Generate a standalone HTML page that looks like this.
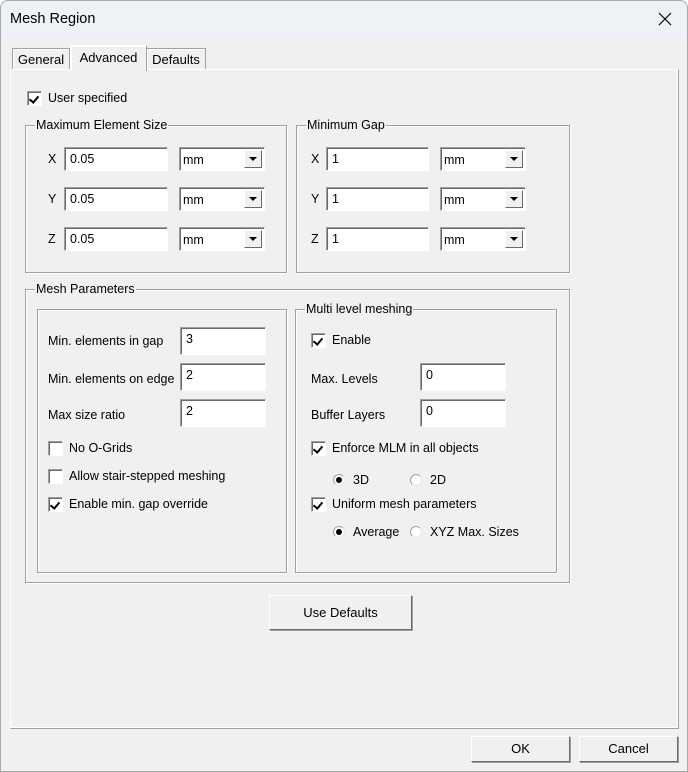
<!DOCTYPE html>
<html><head><meta charset="utf-8"><style>
*{box-sizing:border-box;margin:0;padding:0}
body{width:688px;height:772px;background:#fff;font-family:"Liberation Sans",sans-serif;font-size:12.5px;color:#000;overflow:hidden;position:relative}
.win{position:absolute;left:0;top:0;width:688px;height:772px;background:#f0f0f0;box-shadow:inset 0 0 0 1px #a8a8a8;border-radius:8px 8px 0 0;overflow:hidden}
.title{position:absolute;left:1px;top:1px;width:686px;height:37px;background:#eef2f6;border-radius:8px 8px 0 0}
.a{position:absolute;white-space:nowrap}
.grp{position:absolute;border:1px solid #a0a0a0;box-shadow:1px 1px 0 #fff, inset 1px 1px 0 #fff}
.leg{position:absolute;background:#f0f0f0;padding:0 1px;line-height:14px;top:-8px;left:9px}
.inp{position:absolute;background:#fff;border:1px solid;border-color:#a0a0a0 #fff #fff #a0a0a0;box-shadow:inset 1px 1px 0 #696969;padding:4px 0 0 5px;line-height:14px}
.sel{position:absolute;background:#fff;border:1px solid;border-color:#a0a0a0 #fff #fff #a0a0a0;box-shadow:inset 1px 1px 0 #696969;padding:5px 0 0 3px;line-height:14px}
.sel .b{position:absolute;right:2px;top:2px;width:18px;height:18px;background:#f0f0f0;border:1px solid;border-color:#fff #696969 #696969 #fff}
.sel .b:after{content:"";position:absolute;left:4px;top:6px;border-left:4px solid transparent;border-right:4px solid transparent;border-top:4px solid #000}
.cb{position:absolute;width:15px;height:15px;background:#fff;border:1px solid;border-color:#a0a0a0 #fff #fff #a0a0a0;box-shadow:inset 1px 1px 0 #696969}
.cb.on:after{content:"";position:absolute;left:3px;top:2px;width:4px;height:7px;border:solid #000;border-width:0 2px 2px 0;transform:rotate(40deg)}
.rd{position:absolute;width:12px;height:12px;border-radius:50%;background:#fff;border:1px solid;border-color:#a0a0a0 #e8e8e8 #e8e8e8 #a0a0a0}
.rd.on:after{content:"";position:absolute;left:2px;top:2px;width:6px;height:6px;border-radius:50%;background:#000}
.btn{position:absolute;background:#f0f0f0;border:1px solid;border-color:#fff #696969 #696969 #fff;box-shadow:1px 1px 0 #a0a0a0;text-align:center;font-size:13px}
.tab{position:absolute;background:#f0f0f0;border:1px solid #a0a0a0;border-bottom:none;font-size:13px;text-align:center;box-shadow:inset 1px 1px 0 #fff}
</style></head><body>
<div class="win">
<div class="title"></div>
<div class="a" style="left:10px;top:11px;font-size:14.5px">Mesh Region</div>
<svg class="a" style="left:658px;top:12px" width="14" height="14"><path d="M1 1L13 13M13 1L1 13" stroke="#000" stroke-width="1.2"/></svg>

<div class="a" style="left:10px;top:69px;width:669px;height:660px;border:1px solid #a0a0a0;border-top-color:#fff;border-left-color:#fff;box-shadow:inset -1px -1px 0 #fff"></div>
<div class="tab" style="left:12px;top:48px;width:58px;height:21px;line-height:21px">General</div>
<div class="tab" style="left:146px;top:48px;width:60px;height:21px;line-height:21px">Defaults</div>
<div class="tab" style="left:70px;top:45px;width:77px;height:26px;line-height:23px;border-color:#fff #a0a0a0 #f0f0f0 #fff">Advanced</div>

<div class="cb on" style="left:27px;top:91px"></div>
<div class="a" style="left:48px;top:91px;line-height:15px">User specified</div>

<div class="grp" style="left:25px;top:125px;width:262px;height:148px"><div class="leg">Maximum Element Size</div></div>
<div class="grp" style="left:296px;top:125px;width:274px;height:148px"><div class="leg">Minimum Gap</div></div>

<div class="a" style="left:48px;top:152px">X</div>
<div class="a" style="left:48px;top:192px">Y</div>
<div class="a" style="left:48px;top:232px">Z</div>
<div class="inp" style="left:64px;top:147px;width:104px;height:24px">0.05</div>
<div class="inp" style="left:64px;top:187px;width:104px;height:24px">0.05</div>
<div class="inp" style="left:64px;top:227px;width:104px;height:24px">0.05</div>
<div class="sel" style="left:179px;top:147px;width:86px;height:24px">mm<div class="b"></div></div>
<div class="sel" style="left:179px;top:187px;width:86px;height:24px">mm<div class="b"></div></div>
<div class="sel" style="left:179px;top:227px;width:86px;height:24px">mm<div class="b"></div></div>

<div class="a" style="left:311px;top:152px">X</div>
<div class="a" style="left:311px;top:192px">Y</div>
<div class="a" style="left:311px;top:232px">Z</div>
<div class="inp" style="left:326px;top:147px;width:103px;height:24px">1</div>
<div class="inp" style="left:326px;top:187px;width:103px;height:24px">1</div>
<div class="inp" style="left:326px;top:227px;width:103px;height:24px">1</div>
<div class="sel" style="left:440px;top:147px;width:86px;height:24px">mm<div class="b"></div></div>
<div class="sel" style="left:440px;top:187px;width:86px;height:24px">mm<div class="b"></div></div>
<div class="sel" style="left:440px;top:227px;width:86px;height:24px">mm<div class="b"></div></div>

<div class="grp" style="left:25px;top:289px;width:545px;height:294px"><div class="leg">Mesh Parameters</div></div>
<div class="grp" style="left:37px;top:309px;width:250px;height:264px"></div>
<div class="grp" style="left:295px;top:309px;width:262px;height:264px"><div class="leg">Multi level meshing</div></div>

<div class="a" style="left:48px;top:334px;width:116px;overflow:hidden">Min. elements in gap</div>
<div class="a" style="left:48px;top:372px;width:128px;overflow:hidden">Min. elements on edge</div>
<div class="a" style="left:48px;top:408px">Max size ratio</div>
<div class="inp" style="left:180px;top:327px;width:86px;height:28px">3</div>
<div class="inp" style="left:180px;top:363px;width:86px;height:28px">2</div>
<div class="inp" style="left:180px;top:399px;width:86px;height:28px">2</div>
<div class="cb" style="left:48px;top:441px"></div><div class="a" style="left:69px;top:441px;line-height:15px">No O-Grids</div>
<div class="cb" style="left:48px;top:469px"></div><div class="a" style="left:69px;top:469px;line-height:15px">Allow stair-stepped meshing</div>
<div class="cb on" style="left:48px;top:497px"></div><div class="a" style="left:69px;top:497px;line-height:15px">Enable min. gap override</div>

<div class="cb on" style="left:311px;top:333px"></div><div class="a" style="left:332px;top:333px;line-height:15px">Enable</div>
<div class="a" style="left:311px;top:372px">Max. Levels</div>
<div class="a" style="left:311px;top:408px">Buffer Layers</div>
<div class="inp" style="left:420px;top:363px;width:86px;height:28px">0</div>
<div class="inp" style="left:420px;top:399px;width:86px;height:28px">0</div>
<div class="cb on" style="left:311px;top:441px"></div><div class="a" style="left:332px;top:441px;line-height:15px">Enforce MLM in all objects</div>
<div class="rd on" style="left:333px;top:474px"></div><div class="a" style="left:353px;top:473px;line-height:15px">3D</div>
<div class="rd" style="left:410px;top:474px"></div><div class="a" style="left:430px;top:473px;line-height:15px">2D</div>
<div class="cb on" style="left:311px;top:497px"></div><div class="a" style="left:332px;top:497px;line-height:15px">Uniform mesh parameters</div>
<div class="rd on" style="left:333px;top:526px"></div><div class="a" style="left:353px;top:525px;line-height:15px">Average</div>
<div class="rd" style="left:410px;top:526px"></div><div class="a" style="left:430px;top:525px;line-height:15px">XYZ Max. Sizes</div>

<div class="btn" style="left:269px;top:595px;width:143px;height:35px;line-height:33px">Use Defaults</div>
<div class="btn" style="left:471px;top:736px;width:99px;height:26px;line-height:24px">OK</div>
<div class="btn" style="left:579px;top:736px;width:99px;height:26px;line-height:24px">Cancel</div>
</div>
</body></html>
